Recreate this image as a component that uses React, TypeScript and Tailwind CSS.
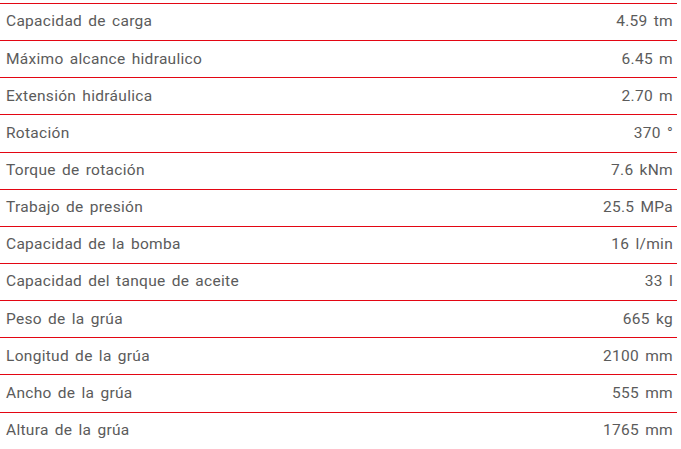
const specs: [string, string][] = [
  ['Capacidad de carga', '4.59 tm'],
  ['Máximo alcance hidraulico', '6.45 m'],
  ['Extensión hidráulica', '2.70 m'],
  ['Rotación', '370 °'],
  ['Torque de rotación', '7.6 kNm'],
  ['Trabajo de presión', '25.5 MPa'],
  ['Capacidad de la bomba', '16 l/min'],
  ['Capacidad del tanque de aceite', '33 l'],
  ['Peso de la grúa', '665 kg'],
  ['Longitud de la grúa', '2100 mm'],
  ['Ancho de la grúa', '555 mm'],
  ['Altura de la grúa', '1765 mm'],
]

export default function App() {
  return (
    <div className="w-[681px] h-[449px] overflow-hidden bg-white pt-[3px]">
      <div
        className="w-[677px] text-[15.5px] text-[#5b5b5b] tracking-[0.3px] [word-spacing:2px]"
        style={{ fontFamily: 'Roboto, "Open Sans", sans-serif' }}
      >
        {specs.map(([label, value]) => (
          <div
            key={label}
            className="h-[37.15px] flex items-center justify-between border-t border-[#e30613] pl-[6px] pr-[4px]"
          >
            <span>{label}</span>
            <span>{value}</span>
          </div>
        ))}
      </div>
    </div>
  )
}
